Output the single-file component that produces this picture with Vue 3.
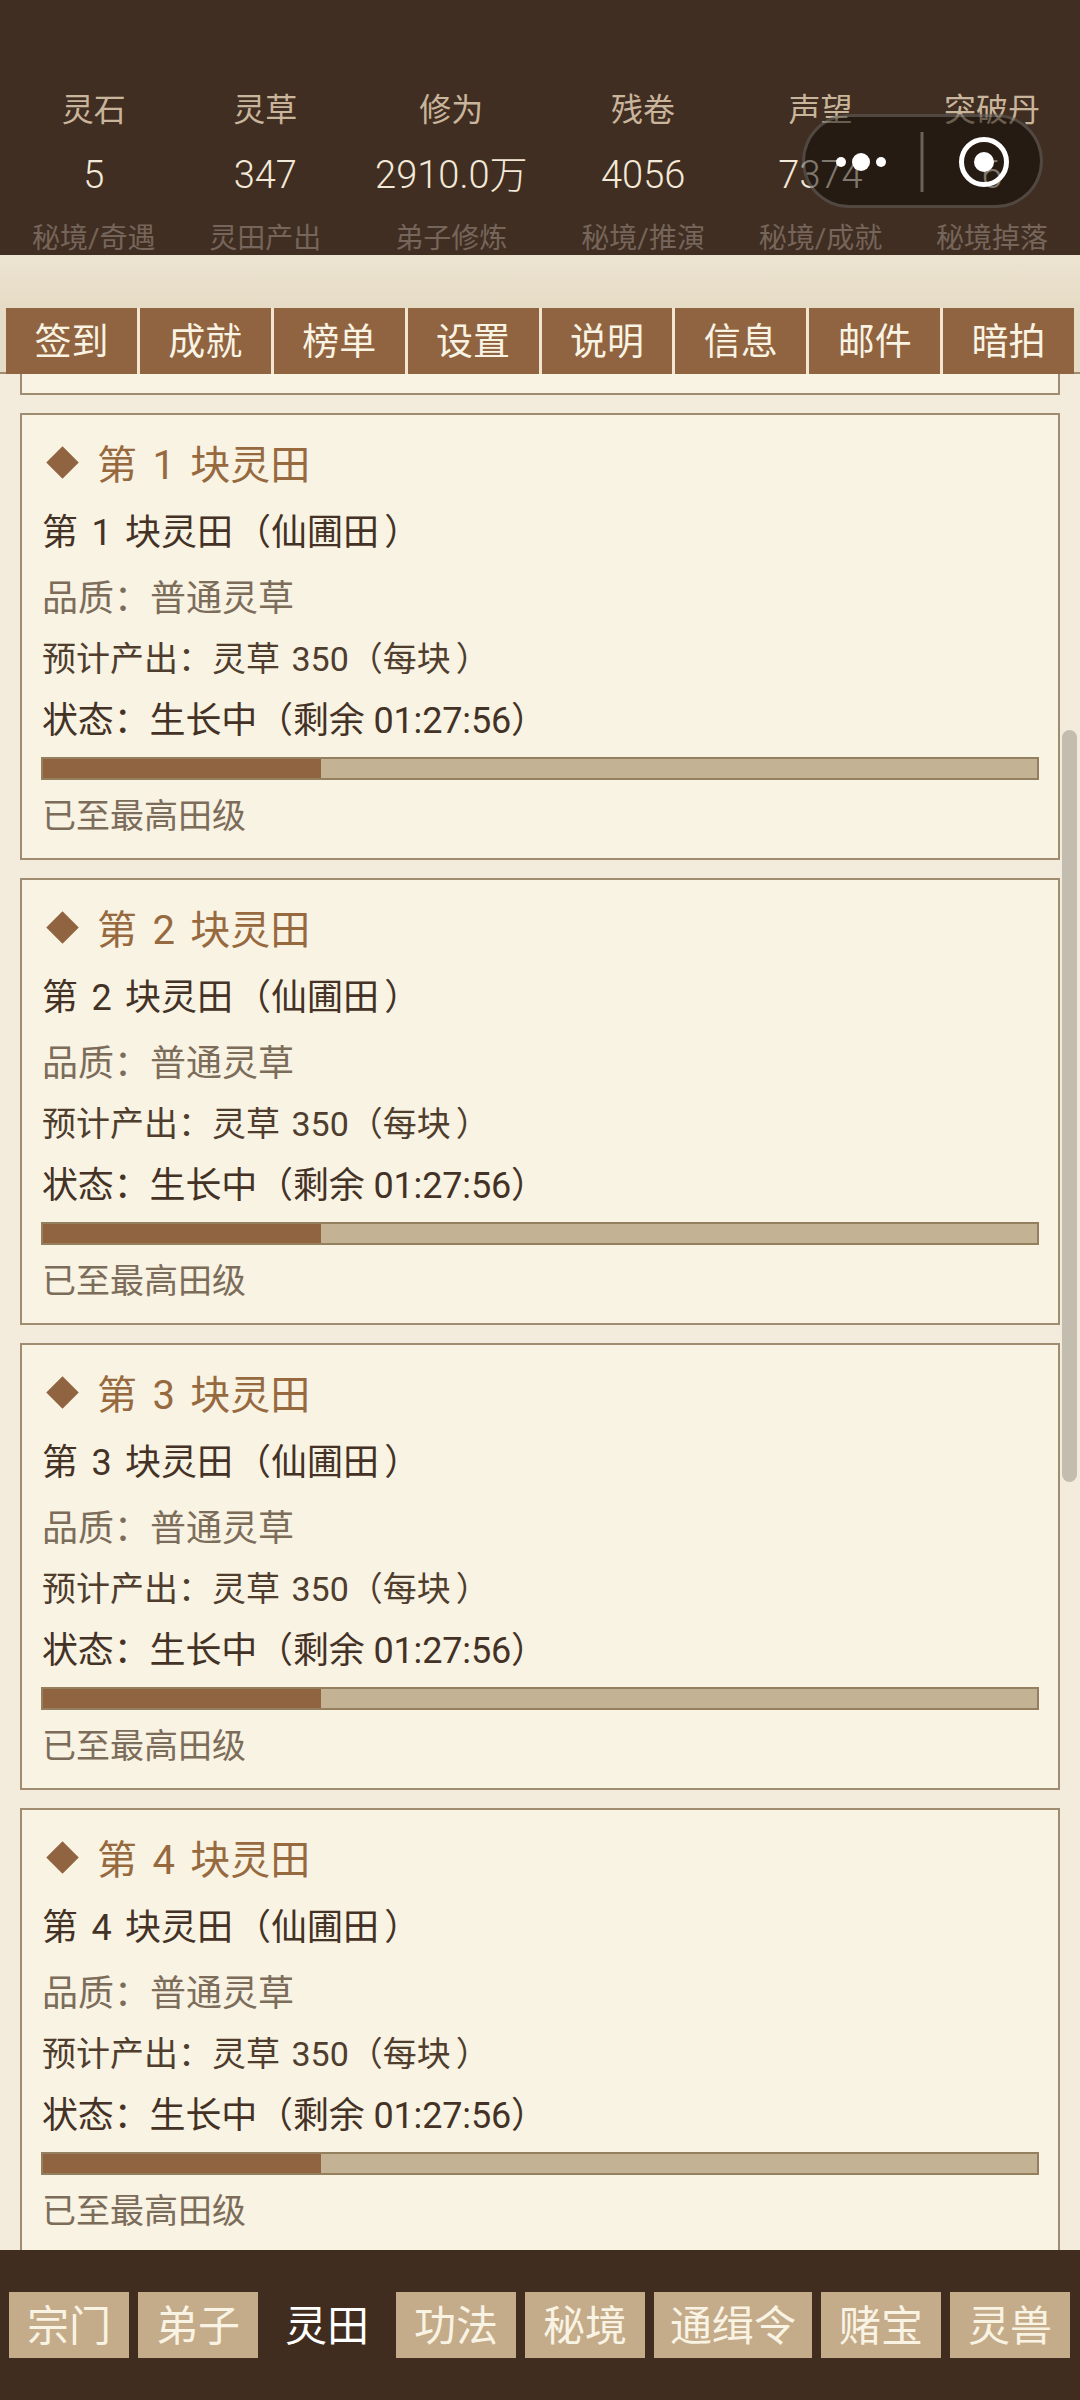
<script setup>
const stats = [
  { label: '灵石', value: '5', sub: '秘境/奇遇' },
  { label: '灵草', value: '347', sub: '灵田产出' },
  { label: '修为', value: '2910.0万', sub: '弟子修炼' },
  { label: '残卷', value: '4056', sub: '秘境/推演' },
  { label: '声望', value: '7374', sub: '秘境/成就' },
  { label: '突破丹', value: '6', sub: '秘境掉落' },
]
const tabs = ['签到', '成就', '榜单', '设置', '说明', '信息', '邮件', '暗拍']
const fields = [1, 2, 3, 4]
const navs = ['宗门', '弟子', '灵田', '功法', '秘境', '通缉令', '赌宝', '灵兽']
</script>

<template>
  <div class="page">
    <header class="stats">
      <div v-for="s in stats" :key="s.label" class="stat">
        <div class="stat-label">{{ s.label }}</div>
        <div class="stat-value">{{ s.value }}</div>
        <div class="stat-sub">{{ s.sub }}</div>
      </div>
      <div class="capsule">
        <svg width="241" height="94" viewBox="0 0 241 94">
          <circle cx="39" cy="48" r="5" fill="#fff" />
          <circle cx="59" cy="48" r="9" fill="#fff" />
          <circle cx="79" cy="48" r="5" fill="#fff" />
          <rect x="118.500" y="18" width="3" height="60" fill="#6d6259" />
          <circle cx="182" cy="48" r="22.500" fill="none" stroke="#fff" stroke-width="5" />
          <circle cx="182" cy="48" r="10" fill="#fff" />
        </svg>
      </div>
    </header>

    <div class="band"></div>

    <nav class="tabs">
      <div v-for="t in tabs" :key="t" class="tab">{{ t }}</div>
    </nav>

    <main class="content">
      <div class="list">
        <div class="stub"></div>
        <section v-for="n in fields" :key="n" class="card">
          <h2 class="card-title"><span class="diamond"></span>第 {{ n }} 块灵田</h2>
          <div class="line name">第 {{ n }} 块灵田<span class="lp">（</span>仙圃田<span class="rp">）</span></div>
          <div class="line quality">品质：普通灵草</div>
          <div class="line output">预计产出：灵草 350（每块<span class="rp">）</span></div>
          <div class="line status">状态：生长中（剩余 01:27:56）</div>
          <div class="bar"><div class="bar-fill" :style="{ width: '28%' }"></div></div>
          <div class="line note">已至最高田级</div>
        </section>
      </div>
      <div class="scrollbar"></div>
    </main>

    <footer class="bottom">
      <div v-for="(b, i) in navs" :key="b" class="nav" :class="{ active: i === 2, wide: b.length === 3 }">{{ b }}</div>
    </footer>
  </div>
</template>

<style scoped>
.page {
  position: relative;
  width: 1080px;
  height: 2400px;
  display: flex;
  flex-direction: column;
  overflow: hidden;
  background: #f3ecdc;
  font-family: Roboto, "Noto Sans CJK SC", "Noto Sans", sans-serif;
}
.stats {
  position: relative;
  height: 255px;
  flex: none;
  box-sizing: border-box;
  padding: 0 5px;
  display: flex;
  justify-content: space-around;
  background: #412e22;
  text-align: center;
}
.stat {
  padding-top: 88px;
}
.stat-label {
  height: 44px;
  line-height: 44px;
  font-size: 32px;
  color: #c9b59b;
}
.stat-value {
  margin-top: 20px;
  height: 46px;
  line-height: 46px;
  font-size: 38px;
  font-weight: 300;
  color: #f3e9d8;
}
.stat-sub {
  margin-top: 21px;
  height: 40px;
  line-height: 40px;
  font-size: 28px;
  color: #75655a;
  white-space: nowrap;
}
.capsule {
  position: absolute;
  left: 802px;
  top: 114px;
  width: 241px;
  height: 94px;
  box-sizing: border-box;
  border-radius: 47px;
  background: rgba(12, 8, 4, 0.5);
  box-shadow: inset 0 0 0 3px rgba(255, 255, 255, 0.2);
}
.capsule svg {
  display: block;
}
.band {
  flex: none;
  height: 53px;
  background: linear-gradient(#ece3d1, #e6dcc6);
}
.tabs {
  flex: none;
  height: 66px;
  box-sizing: border-box;
  padding: 0 6px;
  display: flex;
  background: linear-gradient(#e6dcc6 64px, #a08c70 64px);
}
.tab {
  width: 134px;
  box-sizing: border-box;
  border-right: 3px solid #f3e6d0;
  background: #906440;
  color: #f9f3e3;
  font-size: 37px;
  line-height: 70px;
  text-align: center;
}
.tab:last-child {
  border-right: 0;
  width: 131px;
}
.content {
  position: relative;
  flex: 1;
  min-height: 0;
  overflow: hidden;
}
.list {
  padding: 0 20px;
}
.stub {
  height: 21px;
  box-sizing: border-box;
  border: 2px solid #a08c70;
  border-top: 0;
  background: #f9f3e3;
  margin-bottom: 18px;
}
.card {
  height: 447px;
  box-sizing: border-box;
  margin-bottom: 18px;
  padding: 0 20px;
  border: 2px solid #a08c70;
  background: #f9f3e3;
}
.card-title {
  display: flex;
  align-items: center;
  margin: 0;
  height: 94px;
  font-size: 40px;
  font-weight: 400;
  color: #96693f;
  white-space: pre;
  word-spacing: 5.5px;
}
.diamond {
  width: 23px;
  height: 23px;
  margin: 0 23px 0 9px;
  transform: rotate(45deg);
  background: #906440;
}
.line {
  font-size: 36px;
  height: 50px;
  line-height: 50px;
}
.name {
  color: #433225;
  margin-top: -1px;
  word-spacing: 4.5px;
}
.lp {
  margin-left: 2px;
}
.rp {
  margin-left: 5px;
}
.quality {
  margin-top: 16px;
  color: #7c6c5a;
}
.output {
  margin-top: 10px;
  font-size: 34px;
  color: #4f3d2e;
  word-spacing: 3px;
}
.status {
  margin-top: 12px;
  color: #433225;
  letter-spacing: -0.15px;
}
.bar {
  height: 23px;
  margin: 11px 0 0 -1px;
  width: 998px;
  box-sizing: border-box;
  border: 2px solid #94805f;
  background: #c4b294;
  overflow: hidden;
}
.bar-fill {
  height: 100%;
  background: #906440;
}
.note {
  margin-top: 11px;
  font-size: 34px;
  color: #7c6c5a;
}
.scrollbar {
  position: absolute;
  top: 356px;
  left: 1062px;
  width: 15px;
  height: 752px;
  border-radius: 8px;
  background: #c3bdb0;
}
.bottom {
  flex: none;
  height: 150px;
  box-sizing: border-box;
  padding: 42px 9px;
  display: flex;
  gap: 9px;
  background: #402d20;
}
.nav {
  height: 66px;
  padding: 0 18px;
  font-size: 42px;
  line-height: 70px;
  color: #f9f3e3;
  background: #c4ab8a;
  white-space: nowrap;
}
.nav.wide {
  padding: 0 16px;
}
.nav.active {
  background: transparent;
  color: #fff;
}
</style>
